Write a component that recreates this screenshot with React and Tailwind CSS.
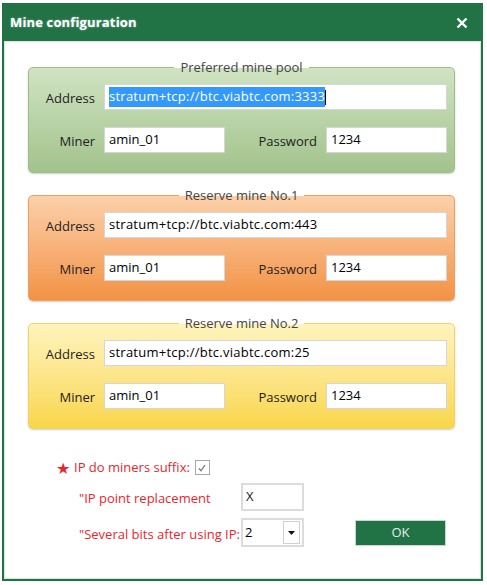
import React from "react";

const pools = [
  {
    title: "Preferred mine pool",
    address: "stratum+tcp://btc.viabtc.com:3333",
    selected: true,
    box: "border-[#9dbe89] from-[#d0e3c3] to-[#a2c38b]",
  },
  {
    title: "Reserve mine No.1",
    address: "stratum+tcp://btc.viabtc.com:443",
    box: "border-[#e9a166] from-[#fbd0a9] to-[#f29241]",
  },
  {
    title: "Reserve mine No.2",
    address: "stratum+tcp://btc.viabtc.com:25",
    box: "border-[#f1d36a] from-[#fff4bd] to-[#f9d645]",
  },
];

const Field = ({ className, children }) => (
  <div
    className={`h-[26px] bg-white border border-[#d6d6d6] px-[4px] flex items-center text-[13px] text-black ${className}`}
  >
    {children}
  </div>
);

const PoolBox = ({ pool }) => {
  return (
    <fieldset
      className={`w-[427px] h-[114px] border rounded-[5px] bg-linear-to-b shadow-[0_1px_2px_rgba(0,0,0,0.2)] px-[6px] ${pool.box}`}
    >
      <legend className="mx-auto px-[6px] text-[13px] leading-[16px] text-[#444]">
        {pool.title}
      </legend>
      <div className="flex items-center mt-[9px]">
        <span className="w-[60px] text-right text-[13px] text-[#222] pt-[4px]">Address</span>
        <Field className="ml-[9px] w-[343px] tracking-[0.25px]">
          {pool.selected ? (
            <>
              <span className="bg-[#3399ff] text-white">{pool.address}</span>
              <span className="w-px h-[15px] bg-black" />
            </>
          ) : (
            pool.address
          )}
        </Field>
      </div>
      <div className="flex items-center mt-[17px]">
        <span className="w-[60px] text-right text-[13px] text-[#222] pt-[4px]">Miner</span>
        <Field className="ml-[9px] w-[121px]">amin_01</Field>
        <span className="w-[92px] text-right text-[13px] text-[#222] pt-[4px]">Password</span>
        <Field className="ml-[9px] w-[121px]">1234</Field>
      </div>
    </fieldset>
  );
};

export default function App() {
  return (
    <div className="w-[487px] h-[585px] bg-white pt-[3px] pl-[2px] font-['Open_Sans','Noto_Sans',sans-serif]">
      <div className="w-[481px] h-[578px] bg-[#217346] flex flex-col px-[2px] pb-[2px]">
        {/* title bar */}
        <div className="h-[38px] flex items-center justify-between pl-[6px] pr-[13px] pt-[2px]">
          <span className="text-white font-bold text-[13px] tracking-[0.15px] [text-shadow:0_0_2px_rgba(255,255,255,0.5)]">
            Mine configuration
          </span>
          <svg width="12" height="12" viewBox="0 0 12 12">
            <path d="M1.5 1.5 L10.5 10.5 M10.5 1.5 L1.5 10.5" stroke="white" strokeWidth="2.4" />
          </svg>
        </div>

        <div className="flex-1 bg-white border border-[#d9e8dd] pl-[23px] pt-[17px]">
          <div className="flex flex-col gap-[14px]">
            {pools.map((pool) => (
              <PoolBox key={pool.title} pool={pool} />
            ))}
          </div>

          <div className="flex items-end mt-[31px]">
            <div className="flex flex-col text-[13px] text-[#e8262e]">
              <div className="flex items-center pl-[28px] h-[15px]">
                <span className="text-[16px] leading-none">★</span>
                <span className="ml-[4px]">IP do miners suffix:</span>
                <span className="ml-[5px] w-[15px] h-[15px] border border-[#a8a8a8] bg-white flex items-center justify-center">
                  <svg width="10" height="10" viewBox="0 0 10 10">
                    <path d="M2 5.5 L4 7.8 L8 2" fill="none" stroke="#777" strokeWidth="1.3" />
                  </svg>
                </span>
              </div>
              <div className="flex items-center mt-[8px] pl-[51px]">
                <span className="w-[162px] pt-[4px]">"IP point replacement</span>
                <div className="w-[63px] h-[28px] border-2 border-[#dcdcdc] bg-white px-[3px] flex items-center text-[#222] text-[13px]">
                  X
                </div>
              </div>
              <div className="flex items-center mt-[7px] pl-[51px]">
                <span className="w-[162px] pt-[4px] whitespace-nowrap">"Several bits after using IP:</span>
                <div className="w-[63px] h-[29px] border-2 border-[#dcdcdc] bg-white pl-[2px] pr-[2px] flex items-center justify-between text-black text-[13px]">
                  <span>2</span>
                  <span className="w-[17px] h-[23px] border border-[#d0d0d0] flex items-center justify-center">
                    <svg width="7" height="4" viewBox="0 0 7 4">
                      <path d="M0 0 H7 L3.5 4 Z" fill="#111" />
                    </svg>
                  </span>
                </div>
              </div>
            </div>
            <button className="ml-[51px] mb-[1px] w-[91px] h-[26px] bg-[#217346] border border-[#c8d8cc] text-[#e6ece8] text-[13px]">
              OK
            </button>
          </div>
        </div>
      </div>
    </div>
  );
}
